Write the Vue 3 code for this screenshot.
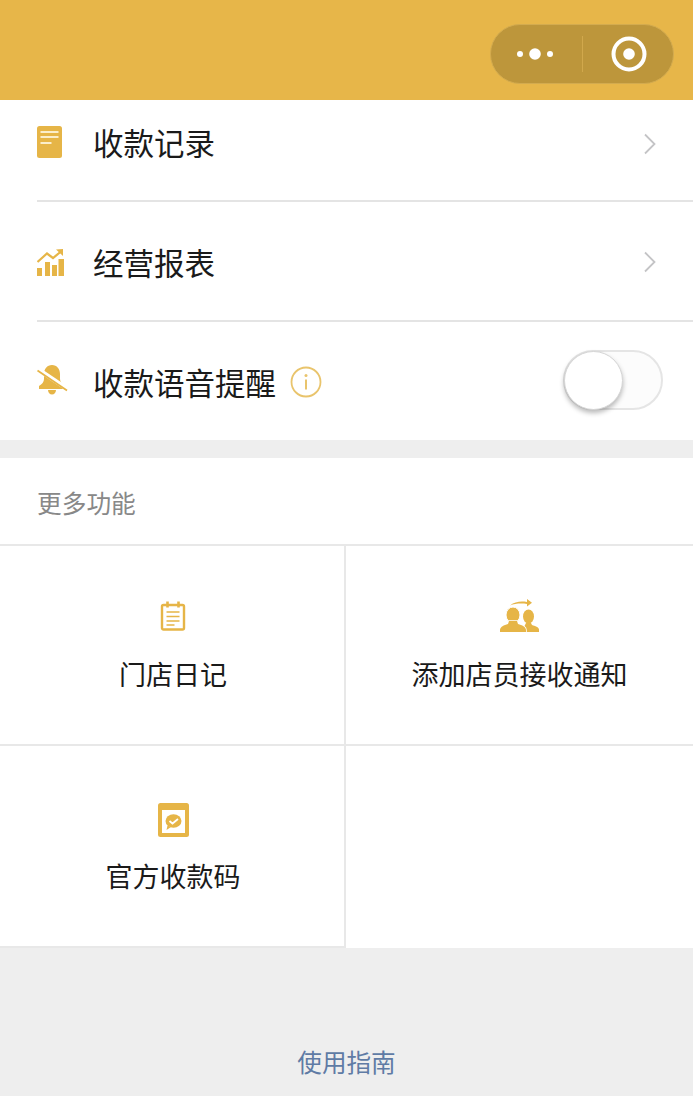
<template>
  <div class="page">
    <div class="header">
      <div class="capsule">
        <div class="capsule-side">
          <svg class="dots" width="36" height="12" viewBox="0 0 36 12">
            <circle cx="3" cy="6" r="3" fill="#fff" />
            <circle cx="18" cy="6" r="5.800" fill="#fff" />
            <circle cx="33" cy="6" r="3" fill="#fff" />
          </svg>
        </div>
        <div class="capsule-line"></div>
        <div class="capsule-side">
          <svg class="ring" width="36" height="36" viewBox="0 0 36 36">
            <circle cx="18" cy="18" r="15.500" fill="none" stroke="#fff" stroke-width="4" />
            <circle cx="18" cy="18" r="5.800" fill="#fff" />
          </svg>
        </div>
      </div>
    </div>

    <div class="menu">
      <div class="row first">
        <span class="icon-box">
          <svg width="25" height="32" viewBox="0 0 25 32">
            <rect width="25" height="32" rx="2.500" fill="#e6b547" />
            <path d="M3.500 6h18M3.500 11h18M3.500 17h11" stroke="#fbeecb" stroke-width="1.800" fill="none" />
          </svg>
        </span>
        <span class="row-text">收款记录</span>
        <svg class="arrow arrow-first" width="14" height="22" viewBox="0 0 14 22">
          <path d="M2 1.500 L11.500 11 L2 20.500" fill="none" stroke="#c4c4c6" stroke-width="1.800" />
        </svg>
      </div>
      <div class="row">
        <span class="icon-box">
          <svg width="27" height="27" viewBox="0 0 27 27">
            <path d="M0.500 13 L10 4.500 L16 9 L24 2.500" fill="none" stroke="#e6b547" stroke-width="2.200" />
            <path d="M19 0.500 L26 0 L26 7 Z" fill="#e6b547" />
            <rect x="0" y="19" width="5" height="8" fill="#e6b547" />
            <rect x="8" y="13" width="5" height="14" fill="#e6b547" />
            <rect x="15" y="16" width="5" height="11" fill="#e6b547" />
            <rect x="21.500" y="10" width="5.500" height="17" fill="#e6b547" />
          </svg>
        </span>
        <span class="row-text">经营报表</span>
        <svg class="arrow" width="14" height="22" viewBox="0 0 14 22">
          <path d="M2 1.500 L11.500 11 L2 20.500" fill="none" stroke="#c4c4c6" stroke-width="1.800" />
        </svg>
      </div>
      <div class="row last">
        <span class="icon-box up">
          <svg width="31" height="30" viewBox="0 0 31 30">
            <path d="M15 0c5 0 8 4 8 9v5c0 3 2 5 5 7v3H2v-3c3-2 5-4 5-7V9c0-5 3-9 8-9z" fill="#e6b547" />
            <path d="M11 25h8c0 2.500-1.800 4.500-4 4.500s-4-2-4-4.500z" fill="#e6b547" />
            <path d="M0 3.500 L31 24.500" stroke="#fff" stroke-width="4.500" />
            <path d="M0.500 5.500 L30 25.500" stroke="#e6b547" stroke-width="1.800" />
          </svg>
        </span>
        <span class="row-text">收款语音提醒</span>
        <svg class="info" width="32" height="32" viewBox="0 0 32 32">
          <circle cx="16" cy="16" r="14.500" fill="none" stroke="#e9c46c" stroke-width="1.800" />
          <circle cx="16" cy="9.500" r="1.500" fill="#e9c46c" />
          <path d="M16 13.500v10" stroke="#e9c46c" stroke-width="2" />
        </svg>
        <div class="switch">
          <div class="knob"></div>
        </div>
      </div>
    </div>

    <div class="more">
      <div class="more-title">更多功能</div>
      <div class="grid">
        <div class="cell">
          <div class="cell-icon">
            <svg width="26" height="30" viewBox="0 0 26 30">
              <rect x="2" y="4" width="22" height="24.500" rx="1.500" fill="none" stroke="#e6b547" stroke-width="2.400" />
              <path d="M7.500 0.500v6M18.500 0.500v6" stroke="#e6b547" stroke-width="2.600" />
              <path d="M6.500 11h13M6.500 15.500h13M6.500 20h13M6.500 24h8" stroke="#e6b547" stroke-width="1.700" />
            </svg>
          </div>
          <span class="cell-text">门店日记</span>
        </div>
        <div class="cell">
          <div class="cell-icon">
            <svg width="39" height="34" viewBox="0 0 39 34">
              <path d="M10 6.500 C15 2.500 21 2 27 3 L27 0 L32 3.800 L27 7.500 L27 5 C21 4.200 15 4.500 10 6.500 Z" fill="#e6b547" />
              <ellipse cx="28.500" cy="17.500" rx="5.500" ry="7" fill="#e6b547" />
              <path d="M24 33v-5l2-4h5l1 2c3 1 7 2 7 4.500v2.500z" fill="#e6b547" />
              <ellipse cx="13" cy="16" rx="7" ry="8" fill="#e6b547" stroke="#fff" stroke-width="1" />
              <path d="M0 33v-2c0-3 4-5 8-6l1-3h8l1 3c4 1 8 3 8 6v2z" fill="#e6b547" stroke="#fff" stroke-width="1.500" />
              <path d="M0 33v-2c0-3 4-5 8-6l1-3h8l1 3c4 1 8 3 8 6v2z" fill="#e6b547" />
            </svg>
          </div>
          <span class="cell-text">添加店员接收通知</span>
        </div>
        <div class="cell lower">
          <div class="cell-icon">
            <svg width="31" height="34" viewBox="0 0 31 34">
              <rect width="31" height="34" rx="2.500" fill="#e6b547" />
              <rect x="4" y="7" width="23" height="23" fill="#fff" />
              <ellipse cx="15.500" cy="18" rx="8" ry="6.800" fill="#e6b547" />
              <path d="M9.500 22.500 L8.500 27 L13 24 Z" fill="#e6b547" />
              <path d="M11.500 18 L14.500 20.500 L20 16" fill="none" stroke="#fff" stroke-width="1.800" />
            </svg>
          </div>
          <span class="cell-text">官方收款码</span>
        </div>
        <div class="cell lower"></div>
      </div>
    </div>

    <div class="footer">使用指南</div>
  </div>
</template>

<script setup>
</script>

<style>
body {
  background: #eeeeee;
}
</style>

<style scoped>
.page {
  width: 693px;
  height: 1096px;
  overflow: hidden;
  background: #eeeeee;
  font-family: "Noto Sans CJK SC", "Noto Sans", sans-serif;
  color: #1a1a1a;
}

.header {
  height: 100px;
  background: #e7b649;
  display: flex;
  justify-content: flex-end;
  align-items: flex-start;
  padding: 24px 19px 0 0;
  box-sizing: border-box;
}

.capsule {
  width: 184px;
  height: 60px;
  box-sizing: border-box;
  border-radius: 30px;
  background: #bd963b;
  border: 1px solid #d3ab4f;
  display: flex;
  align-items: center;
}

.capsule-side {
  flex: 1;
  display: flex;
  justify-content: center;
  align-items: center;
}

.dots {
  margin-right: 2px;
}

.ring {
  margin-left: 2px;
}

.capsule-line {
  width: 1px;
  height: 36px;
  background: #d1a84c;
}

.menu {
  background: #fff;
}

.row {
  height: 120px;
  margin-left: 37px;
  border-bottom: 2px solid #e4e4e4;
  box-sizing: border-box;
  display: flex;
  align-items: center;
  padding-top: 2px;
  padding-right: 30px;
}

.row.first {
  height: 102px;
  padding-top: 0;
  padding-bottom: 16px;
}

.row.last {
  border-bottom: none;
  height: 118px;
}

.icon-box {
  width: 56px;
  flex: none;
  display: flex;
}

.icon-box.up {
  margin-top: -4px;
}

.row-text {
  font-size: 30.500px;
  line-height: 40px;
}

.arrow {
  margin-left: auto;
  margin-right: 6px;
}

.arrow-first {
  margin-top: 4px;
}

.info {
  margin-left: 14px;
}

.switch {
  margin-left: auto;
  margin-top: -4px;
  width: 100px;
  height: 60px;
  box-sizing: border-box;
  border-radius: 30px;
  background: #fcfcfc;
  border: 2px solid #e5e5e5;
  position: relative;
}

.knob {
  position: absolute;
  left: -1px;
  top: -1px;
  width: 59px;
  height: 59px;
  box-sizing: border-box;
  border-radius: 50%;
  background: #fff;
  border: 1px solid #d6d6d6;
  box-shadow: 0 3px 5px rgba(0, 0, 0, 0.28);
}

.more {
  margin-top: 18px;
  background: #fff;
}

.more-title {
  height: 88px;
  padding-left: 37px;
  font-size: 24.700px;
  line-height: 88px;
  color: #888888;
  border-bottom: 2px solid #e8e8e8;
  box-sizing: border-box;
}

.grid {
  display: grid;
  grid-template-columns: 346px 347px;
  grid-template-rows: 200px 202px;
}

.cell {
  display: flex;
  flex-direction: column;
  align-items: center;
  box-sizing: border-box;
  padding-top: 50px;
  border-right: 2px solid #e8e8e8;
  border-bottom: 2px solid #e8e8e8;
}

.cell:nth-child(odd) {
  padding-left: 2px;
}

.cell:nth-child(even) {
  border-right: none;
}

.cell:nth-child(4) {
  border-bottom: none;
}

.cell.lower {
  padding-top: 54px;
}

.cell-icon {
  height: 40px;
  display: flex;
  align-items: center;
}

.cell-text {
  font-size: 27px;
  line-height: 36px;
  margin-top: 20px;
}

.cell.lower .cell-text {
  margin-top: 18px;
}

.footer {
  margin-top: 95px;
  text-align: center;
  font-size: 24.600px;
  line-height: 36px;
  color: #5f7ba5;
}
</style>
